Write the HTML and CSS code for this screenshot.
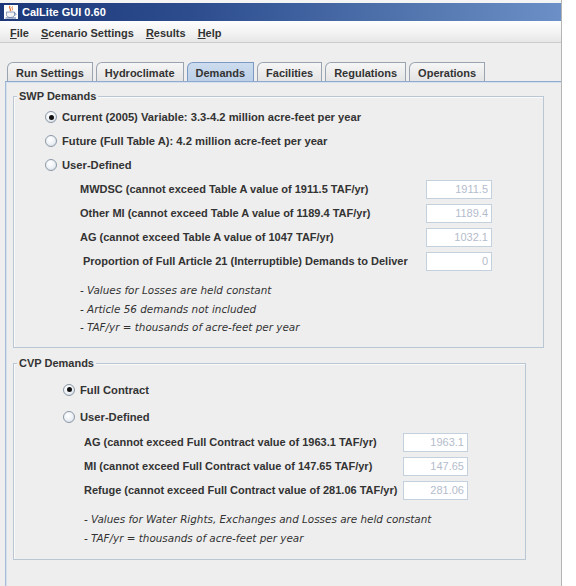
FILE: index.html
```html
<!DOCTYPE html>
<html>
<head>
<meta charset="utf-8">
<link rel="stylesheet" href="styles.css">
</head>
<body>
<div class="window">
  <div class="titlebar">
    <svg class="appicon" width="14" height="14" viewBox="0 0 14 14">
      <path d="M6 1 C4 3 8 4 6 6" stroke="#e0702a" stroke-width="1.3" fill="none"/>
      <path d="M8.5 1.5 C7 3 9.5 4 8 5.5" stroke="#e0702a" stroke-width="1" fill="none"/>
      <path d="M2.5 7 H10.5 V9.5 C10.5 11.5 9 12.5 6.5 12.5 C4 12.5 2.5 11.5 2.5 9.5 Z" fill="#f4f4f4" stroke="#6b7fa8" stroke-width="0.8"/>
      <path d="M10.5 8 C12.5 8 12.5 10.5 10.3 10.3" stroke="#6b7fa8" stroke-width="0.9" fill="none"/>
      <path d="M1.5 13 H12" stroke="#5a6f9a" stroke-width="1"/>
    </svg>
    <span class="title">CalLite GUI 0.60</span>
  </div>
  <div class="menubar">
    <span class="menu menu-file"><u>F</u>ile</span>
    <span class="menu"><u>S</u>cenario Settings</span>
    <span class="menu"><u>R</u>esults</span>
    <span class="menu"><u>H</u>elp</span>
  </div>
  <div class="toolarea"></div>
  <div class="tabs">
    <div class="tab">Run Settings</div>
    <div class="tab">Hydroclimate</div>
    <div class="tab selected">Demands</div>
    <div class="tab">Facilities</div>
    <div class="tab">Regulations</div>
    <div class="tab">Operations</div>
  </div>
  <div class="panel">
    <div class="group swp">
      <div class="group-title">SWP Demands</div>
      <div class="radio-row"><span class="radio checked"></span>Current (2005) Variable: 3.3-4.2 million acre-feet per year</div>
      <div class="radio-row"><span class="radio"></span>Future (Full Table A): 4.2 million acre-feet per year</div>
      <div class="radio-row"><span class="radio"></span>User-Defined</div>
      <div class="field-row"><span class="label">MWDSC (cannot exceed Table A value of 1911.5 TAF/yr)</span><span class="field">1911.5</span></div>
      <div class="field-row"><span class="label">Other MI (cannot exceed Table A value of 1189.4 TAF/yr)</span><span class="field">1189.4</span></div>
      <div class="field-row"><span class="label">AG (cannot exceed Table A value of 1047 TAF/yr)</span><span class="field">1032.1</span></div>
      <div class="field-row"><span class="label indent">Proportion of Full Article 21 (Interruptible) Demands to Deliver</span><span class="field">0</span></div>
      <div class="notes">
        <div>- Values for Losses are held constant</div>
        <div>- Article 56 demands not included</div>
        <div>- TAF/yr = thousands of acre-feet per year</div>
      </div>
    </div>
    <div class="group cvp">
      <div class="group-title">CVP Demands</div>
      <div class="radio-row"><span class="radio checked"></span>Full Contract</div>
      <div class="radio-row"><span class="radio"></span>User-Defined</div>
      <div class="field-row"><span class="label">AG (cannot exceed Full Contract value of 1963.1 TAF/yr)</span><span class="field">1963.1</span></div>
      <div class="field-row"><span class="label">MI (cannot exceed Full Contract value of 147.65 TAF/yr)</span><span class="field">147.65</span></div>
      <div class="field-row"><span class="label">Refuge (cannot exceed Full Contract value of 281.06 TAF/yr)</span><span class="field">281.06</span></div>
      <div class="notes">
        <div>- Values for Water Rights, Exchanges and Losses are held constant</div>
        <div>- TAF/yr = thousands of acre-feet per year</div>
      </div>
    </div>
  </div>
</div>
</body>
</html>
```
FILE: styles.css
```css
html, body {
  margin: 0;
  padding: 0;
  background: #ffffff;
}
body {
  font-family: "Liberation Sans", Arial, sans-serif;
  font-size: 11px;
  color: #333333;
}
.window {
  width: 562px;
  height: 586px;
  border-right: 1px solid #b4b4b4;
  padding-top: 3px;
  box-sizing: border-box;
  overflow: hidden;
  background-image: linear-gradient(#f4f4f4, #f4f4f4);
  background-size: 100% 3px;
  background-repeat: no-repeat;
  background-color: #eeeeee;
}
.titlebar {
  height: 18px;
  display: flex;
  align-items: center;
  padding-left: 4px;
  gap: 4px;
  background: linear-gradient(to right, #1c3878 0%, #2d4d8f 35%, #5477b0 75%, #6b8fc6 100%);
  color: #ffffff;
}
.appicon {
  background: #ffffff;
  flex: none;
}
.title {
  font-weight: bold;
  font-size: 11px;
}
.menubar {
  height: 22px;
  display: flex;
  align-items: center;
  background: linear-gradient(#fdfdfd, #f2f2f2 60%, #e6e6e6);
  border-bottom: 1px solid #cccccc;
  padding-left: 10px;
  gap: 12px;
  font-weight: bold;
  font-size: 11px;
  color: #333333;
  padding-top: 2px;
  box-sizing: border-box;
}
.menu u {
  text-decoration-thickness: 1px;
  text-underline-offset: 1px;
}
.toolarea {
  height: 19px;
}
.tabs {
  height: 19px;
  display: flex;
  align-items: flex-end;
  padding-left: 7px;
  gap: 3px;
}
.tab {
  height: 19px;
  box-sizing: border-box;
  border: 1px solid #9aa4b0;
  border-bottom: none;
  border-top-left-radius: 6px 6px;
  background: linear-gradient(#f6f6f6, #e4e4e4);
  padding: 0 8px;
  display: flex;
  align-items: center;
  font-weight: bold;
  font-size: 11px;
  color: #333333;
  padding-top: 1px;
}
.tab.selected {
  background: linear-gradient(#cddcee, #bcd0e8);
  border-color: #7a9ac4;
}
.panel {
  margin-left: 5px;
  border-top: 1px solid #8fa9cf;
  border-left: 1px solid #a7bcd8;
  box-shadow: inset 0 1px 0 #d6e1ef, inset 1px 0 0 #d6e1ef;
  padding-left: 7px;
  padding-top: 14px;
  height: 505px;
}
.group {
  position: relative;
  border: 1px solid #b9c6d3;
  box-shadow: inset 1px 1px 0 #fafafa;
  box-sizing: border-box;
}
.group-title {
  position: absolute;
  top: -8px;
  left: 3px;
  padding: 0 2px;
  background: #eeeeee;
  font-weight: bold;
  font-size: 11px;
  line-height: 14px;
  color: #333333;
}
.swp {
  width: 531px;
  height: 252px;
  padding-top: 8px;
}
.cvp {
  width: 513px;
  height: 197px;
  margin-top: 15px;
  padding-top: 12px;
}
.radio-row {
  height: 24px;
  display: flex;
  align-items: center;
  font-weight: bold;
  font-size: 11.2px;
  gap: 5px;
  white-space: nowrap;
}
.swp .radio-row {
  padding-left: 31px;
}
.cvp .radio-row {
  padding-left: 49px;
  height: 27px;
}
.radio {
  width: 12px;
  height: 12px;
  box-sizing: border-box;
  border-radius: 50%;
  border: 1px solid #8c98a6;
  background: radial-gradient(circle at 40% 35%, #ffffff 0%, #eef2f6 50%, #c9d3de 100%);
  position: relative;
  flex: none;
}
.radio.checked::after {
  content: "";
  position: absolute;
  left: 2.5px;
  top: 2.5px;
  width: 5px;
  height: 5px;
  border-radius: 50%;
  background: #111111;
}
.field-row {
  height: 24px;
  display: flex;
  align-items: center;
  font-weight: bold;
  font-size: 11px;
  white-space: nowrap;
}
.swp .field-row {
  padding-left: 66px;
}
.cvp .field-row {
  padding-left: 70px;
}
.label {
  flex: none;
}
.swp .label {
  width: 346px;
}
.cvp .label {
  width: 319px;
}
.label.indent {
  padding-left: 3px;
  box-sizing: border-box;
}
.field {
  flex: none;
  width: 66px;
  height: 19px;
  box-sizing: border-box;
  border: 1px solid #c3d0de;
  background: #ffffff;
  font-weight: normal;
  font-size: 11px;
  color: #b4bccc;
  text-align: right;
  padding-right: 3px;
  line-height: 17px;
}
.cvp .field {
  width: 65px;
}
.notes {
  margin-top: 8px;
  font-style: italic;
  font-family: "DejaVu Sans", sans-serif;
  font-size: 10.4px;
  line-height: 18.5px;
  color: #333333;
  white-space: nowrap;
}
.swp .notes {
  padding-left: 66px;
}
.cvp .notes {
  padding-left: 70px;
}
```
